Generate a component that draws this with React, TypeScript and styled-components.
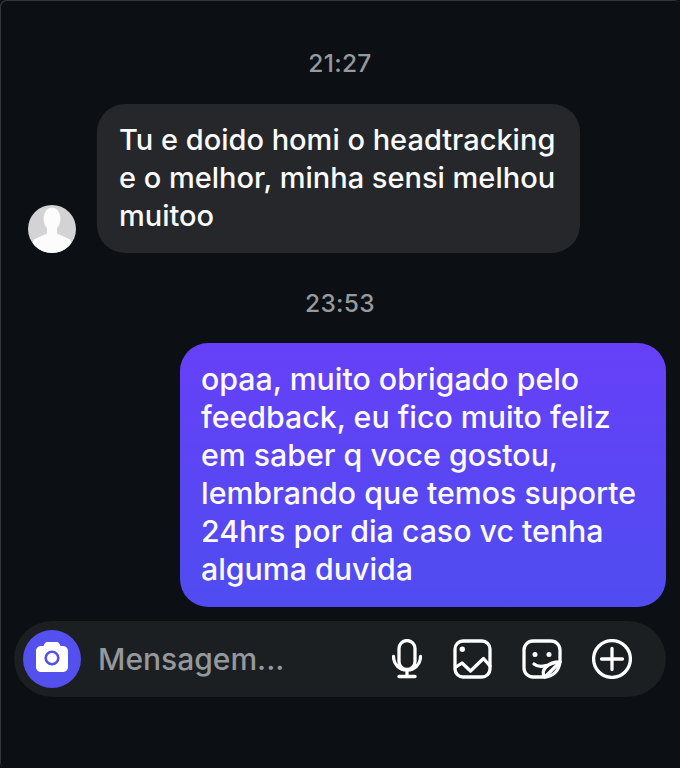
import React from "react";
import styled, { createGlobalStyle } from "styled-components";

const GlobalStyle = createGlobalStyle`
  html, body {
    margin: 0;
    padding: 0;
    background: #0c0f14;
  }
`;

const Screen = styled.div`
  width: 680px;
  height: 768px;
  box-sizing: border-box;
  padding: 48px 14px 0;
  overflow: hidden;
  display: flex;
  flex-direction: column;
  font-family: Inter, "Liberation Sans", sans-serif;
  background: #0c0f14;
  box-shadow: inset 1px 1px 0 #33353a;
  border-radius: 6px;
`;

const Time = styled.div<{ $gap: number }>`
  height: 30px;
  line-height: 30px;
  margin-bottom: ${(p) => p.$gap}px;
  text-align: center;
  font-size: 24.5px;
  font-weight: 450;
  letter-spacing: 0.3px;
  color: #96999d;
`;

const IncomingRow = styled.div`
  display: flex;
  align-items: flex-end;
  gap: 21px;
  padding-left: 14px;
  margin-bottom: 35px;
`;

const Avatar = styled.svg`
  width: 48px;
  height: 48px;
  flex: none;
  display: block;
`;

const Bubble = styled.div<{ $mine?: boolean }>`
  box-sizing: border-box;
  height: ${(p) => (p.$mine ? 264 : 149)}px;
  width: ${(p) => (p.$mine ? 486 : 483)}px;
  padding: 17px 22px 0 ${(p) => (p.$mine ? 21 : 22)}px;
  border-radius: 28px;
  font-size: ${(p) => (p.$mine ? 30.3 : 29)}px;
  font-weight: 450;
  line-height: 38px;
  color: #fbfbfd;
  background: ${(p) =>
    p.$mine ? "linear-gradient(180deg, #6640f8 0%, #4f4cf0 100%)" : "#25272a"};
  margin-left: ${(p) => (p.$mine ? 166 : 0)}px;
`;

const Composer = styled.div`
  height: 76px;
  margin-top: 14px;
  box-sizing: border-box;
  padding: 0 34px 0 9px;
  border-radius: 38px;
  background: #1c1f21;
  display: flex;
  align-items: center;
`;

const CameraButton = styled.div`
  width: 58px;
  height: 58px;
  flex: none;
  border-radius: 50%;
  background: #5450ee;
  display: flex;
  align-items: center;
  justify-content: center;
`;

const Placeholder = styled.div`
  flex: 1;
  margin-left: 17px;
  font-size: 30px;
  font-weight: 450;
  color: #95989c;
`;

const Actions = styled.div`
  display: flex;
  align-items: center;
  gap: 30px;
`;

const Icon = styled.svg<{ $w?: number }>`
  width: ${(p) => p.$w ?? 40}px;
  height: 40px;
  flex: none;
  display: block;
  fill: none;
  stroke: #fff;
  stroke-width: 3.3;
  stroke-linecap: round;
  stroke-linejoin: round;
`;

export default function App() {
  return (
    <>
      <GlobalStyle />
      <Screen>
        <Time $gap={26}>21:27</Time>
        <IncomingRow>
          <Avatar viewBox="0 0 48 48">
            <defs>
              <clipPath id="avatar-clip">
                <circle cx="24" cy="24" r="24" />
              </clipPath>
            </defs>
            <circle cx="24" cy="24" r="24" fill="#d3d3d5" />
            <g clipPath="url(#avatar-clip)" fill="#fcfcfc">
              <ellipse cx="24" cy="14" rx="8.5" ry="11.5" />
              <path d="M19 20v8.500l-12 5.500c-2 1-3 3-3 14h40c0-11-1-13-3-14l-12-5.500V20z" />
            </g>
          </Avatar>
          <Bubble>
            Tu e doido homi o headtracking
            <br />e o melhor, minha sensi melhou
            <br />
            muitoo
          </Bubble>
        </IncomingRow>
        <Time $gap={25}>23:53</Time>
        <Bubble $mine>
          opaa, muito obrigado pelo
          <br />
          feedback, eu fico muito feliz
          <br />
          em saber q voce gostou,
          <br />
          lembrando que temos suporte
          <br />
          24hrs por dia caso vc tenha
          <br />
          alguma duvida
        </Bubble>
        <Composer>
          <CameraButton>
            <svg width="36" height="36" viewBox="0 0 36 36">
              <path
                d="M13.500 1h9c1.300 0 2.300.6 2.900 1.700L26.500 5H29c2.800 0 5 2.200 5 5v16c0 2.800-2.200 5-5 5H7c-2.800 0-5-2.200-5-5V10c0-2.800 2.200-5 5-5h2.500l1.100-2.300C11.200 1.600 12.200 1 13.500 1z"
                fill="#fff"
              />
              <circle cx="18" cy="17" r="6.300" fill="none" stroke="#5450ee" strokeWidth="2.600" />
            </svg>
          </CameraButton>
          <Placeholder>Mensagem...</Placeholder>
          <Actions>
            <Icon $w={30} viewBox="0 0 30 40">
              <rect x="7" y="1.500" width="16" height="29" rx="8" />
              <path d="M1.500 17.500c0 8 6 13.500 13.500 13.500s13.500-5.500 13.500-13.500" />
              <path d="M15 31v6.500" />
              <path d="M7 37.500h16" />
            </Icon>
            <Icon viewBox="0 0 40 40">
              <rect x="3" y="2" width="35" height="36" rx="8" />
              <circle cx="10.300" cy="10.300" r="2.700" fill="#fff" stroke="none" />
              <path d="M4 28l6-4 8.500 8 13-12.500 6.500 7.500" />
            </Icon>
            <Icon viewBox="0 0 40 40">
              <path d="M38 23V11c0-5-4-9-9-9H11c-5 0-9 4-9 9v18c0 5 4 9 9 9h12z" />
              <path d="M38 23c-1 8-6 14-15 15-3-3-2-7 1-10 3-3 9-5 14-5z" />
              <circle cx="13" cy="15.500" r="2.500" fill="#fff" stroke="none" />
              <circle cx="27" cy="15.500" r="2.500" fill="#fff" stroke="none" />
              <path d="M12 25c3 2.500 7 3 12 1.500" />
            </Icon>
            <Icon viewBox="0 0 40 40">
              <circle cx="20" cy="20" r="18.400" />
              <path d="M20 9.500v21M9.500 20h21" />
            </Icon>
          </Actions>
        </Composer>
      </Screen>
    </>
  );
}
